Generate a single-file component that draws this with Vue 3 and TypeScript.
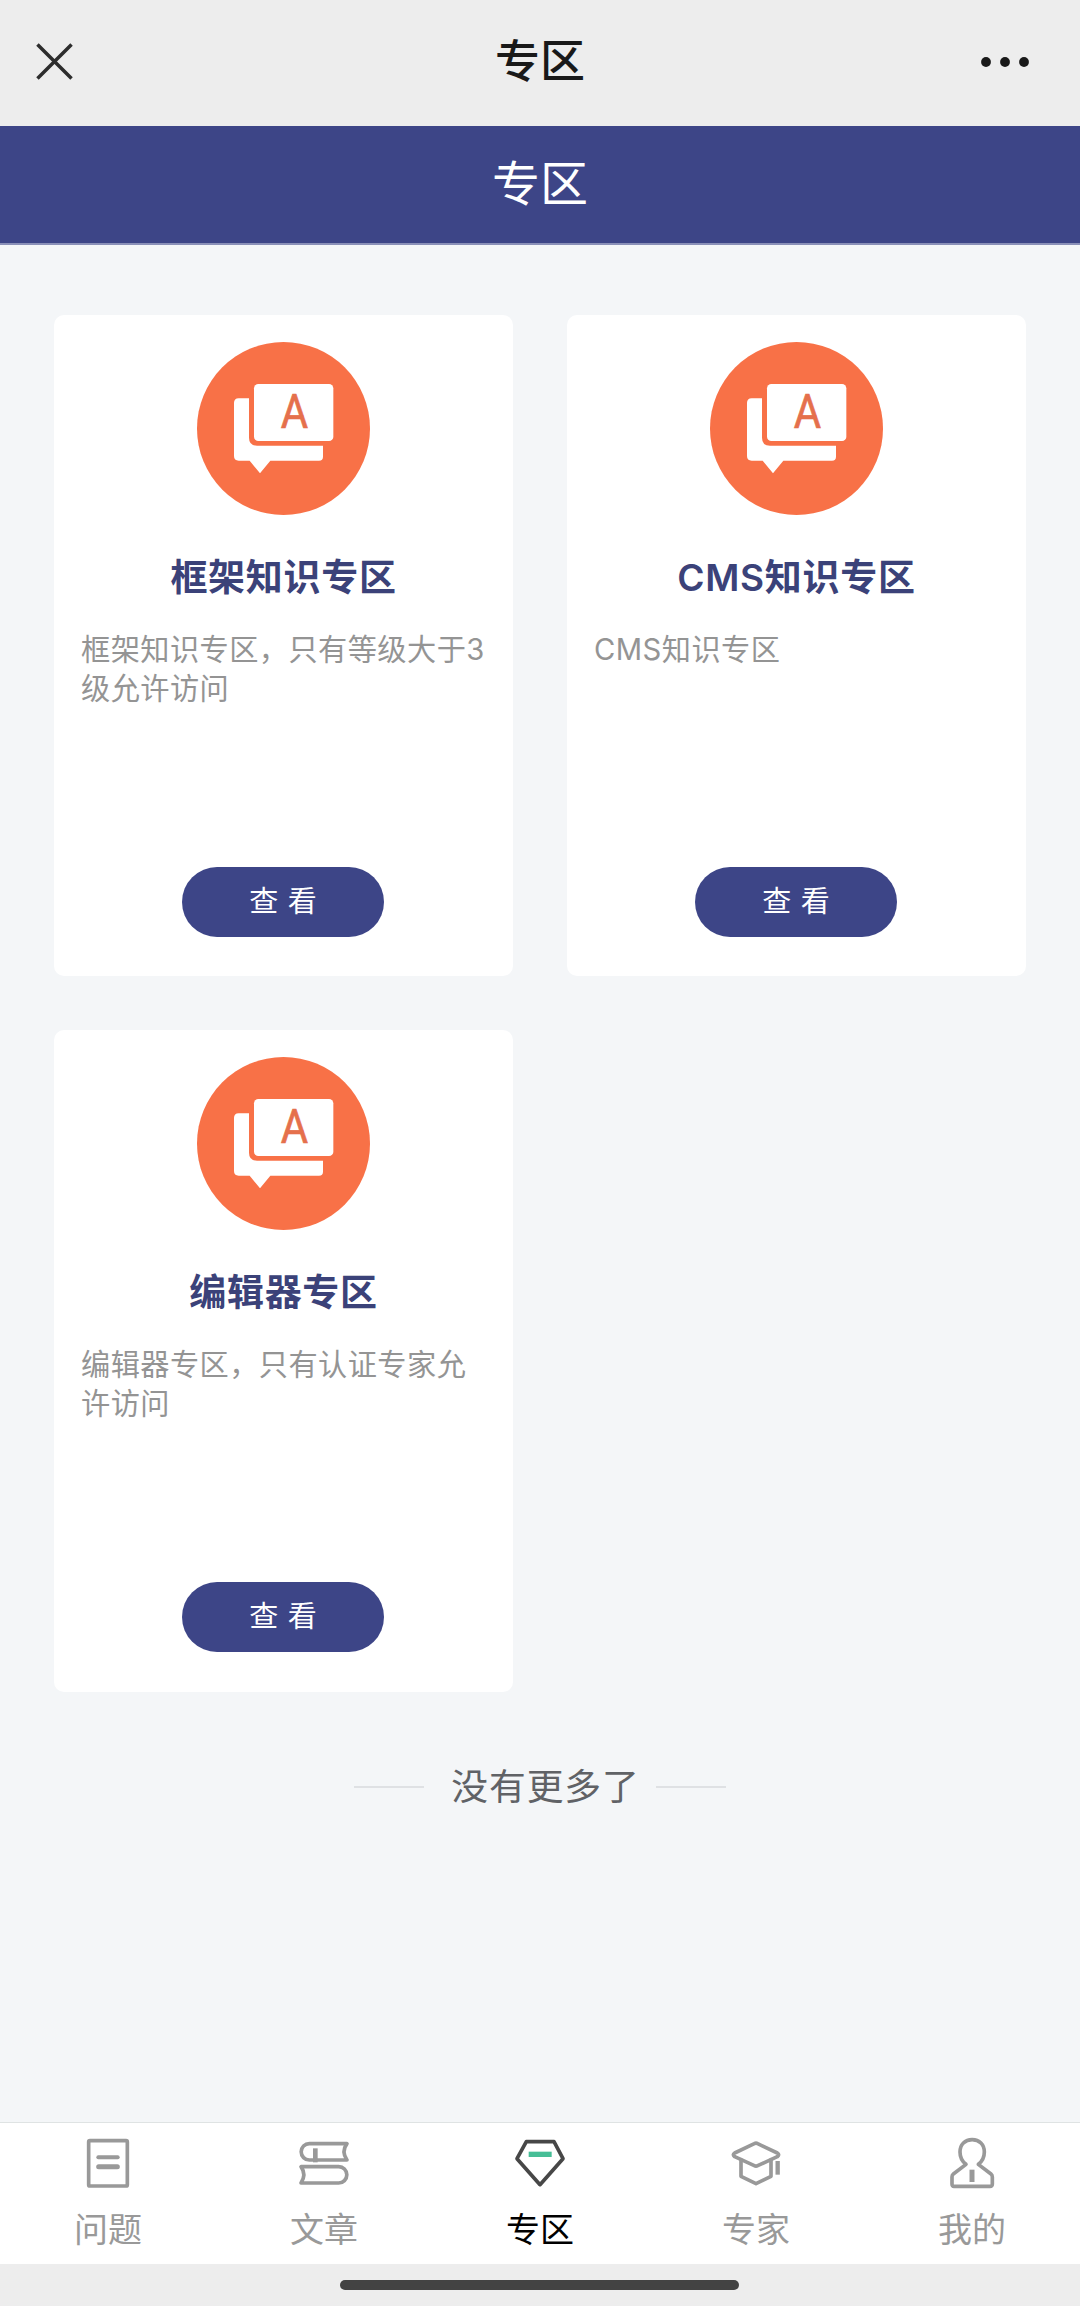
<script setup lang="ts">
interface Zone {
  id: number
  title: string
  desc: string
}

interface Tab {
  key: string
  label: string
}

const zones: Zone[] = [
  { id: 1, title: '框架知识专区', desc: '框架知识专区，只有等级大于3级允许访问' },
  { id: 2, title: 'CMS知识专区', desc: 'CMS知识专区' },
  { id: 3, title: '编辑器专区', desc: '编辑器专区，只有认证专家允许访问' },
]

const tabs: Tab[] = [
  { key: 'question', label: '问题' },
  { key: 'article', label: '文章' },
  { key: 'zone', label: '专区' },
  { key: 'expert', label: '专家' },
  { key: 'mine', label: '我的' },
]

const activeTab = 'zone'
</script>

<template>
  <div class="page">
    <header class="shell-bar">
      <div class="shell-side">
        <svg class="close" viewBox="0 0 38 38" fill="none" stroke="#2d2d2d" stroke-width="3.6">
          <path d="M1.500 1.500 36.500 36.500M36.500 1.500 1.500 36.500" />
        </svg>
      </div>
      <span class="shell-title">专区</span>
      <div class="shell-side shell-side-end">
        <svg class="more" viewBox="0 0 50 12" fill="#191919">
          <circle cx="6" cy="6" r="4.9" />
          <circle cx="25" cy="6" r="4.9" />
          <circle cx="44" cy="6" r="4.9" />
        </svg>
      </div>
    </header>

    <div class="nav-bar"><span>专区</span></div>

    <main class="content">
      <section class="grid">
        <article v-for="zone in zones" :key="zone.id" class="card">
          <svg class="badge" viewBox="0 0 519 519">
            <circle cx="259.5" cy="259.5" r="259.5" fill="#f87147" />
            <path
              fill="#fff"
              d="M111 183q0-14 14-14h31v118q0 24 24 24h198v33q0 12-12 12H220l-31 38-31-38h-33q-14 0-14-14z"
            />
            <rect x="171" y="126" width="238" height="171" rx="13" fill="#fff" />
            <text
              class="badge-letter"
              x="251"
              y="259"
              textLength="82"
              lengthAdjust="spacingAndGlyphs"
            >A</text>
          </svg>
          <h2 class="card-title">{{ zone.title }}</h2>
          <p class="card-desc">{{ zone.desc }}</p>
          <button class="card-btn" type="button">查 看</button>
        </article>
      </section>

      <div class="end">
        <i class="rule"></i>
        <span class="end-text">没有更多了</span>
        <i class="rule"></i>
      </div>
    </main>

    <nav class="tab-bar">
      <div
        v-for="tab in tabs"
        :key="tab.key"
        class="tab"
        :class="{ active: tab.key === activeTab }"
      >
        <svg
          class="tab-icon"
          viewBox="0 0 168 168"
          fill="none"
          stroke="currentColor"
          stroke-width="11"
          stroke-linejoin="round"
          stroke-linecap="round"
        >
          <template v-if="tab.key === 'question'">
            <rect x="26" y="17" width="116" height="136" rx="4" />
            <path d="M55 67H113" stroke-width="12" />
            <path d="M56 95H112" stroke-width="15" />
          </template>
          <template v-else-if="tab.key === 'article'">
            <path d="M153 26H40a24.500 24.500 0 0 0 0 49H153Q135 50 153 26z" />
            <path d="M58 40V82" stroke-width="14" stroke-linecap="butt" />
            <path d="M15 95H128a24.500 24.500 0 0 1 0 49H15Q32 119 15 95z" />
          </template>
          <template v-else-if="tab.key === 'zone'">
            <path d="M43 20H126L153 71 84 149 15 71z" />
            <path d="M50 58H119" stroke="#46be96" stroke-width="16" stroke-linecap="butt" />
          </template>
          <template v-else-if="tab.key === 'expert'">
            <path d="M79 26q5-3 10 0L148 54q8 5 0 11L89 92q-5 3-10 0L20 65q-8-6 0-11z" />
            <path d="M39 74V124L84 146 129 124V74" />
            <path d="M149 78V119" stroke-width="13" stroke-linecap="butt" />
          </template>
          <template v-else>
            <path
              d="M66 88C54 79 48 67 48 51 48 28 63 14 84.500 14S121 28 121 51C121 67 115 79 103 88L141 117Q145 120 145 126V147Q145 154 138 154H30Q24 154 24 147V126Q24 120 28 117z"
            />
            <path d="M84 104V141" stroke-width="15" stroke-linecap="butt" />
          </template>
        </svg>
        <span class="tab-label">{{ tab.label }}</span>
      </div>
    </nav>

    <div class="home-area"><i class="home-indicator"></i></div>
  </div>
</template>

<style>
body {
  margin: 0;
  background: #ededed;
}
</style>

<style scoped>
.page {
  display: flex;
  flex-direction: column;
  width: 1080px;
  height: 2306px;
  overflow: hidden;
  background: #f4f6f8;
  font-family: Inter, 'Noto Sans CJK SC', sans-serif;
}

.shell-bar {
  display: flex;
  flex: none;
  align-items: center;
  box-sizing: border-box;
  height: 126px;
  padding: 0 50px 3px 36px;
  background: #ededed;
}

.shell-side {
  display: flex;
  flex: 1;
  align-items: center;
}

.shell-side-end {
  justify-content: flex-end;
}

.close {
  width: 37px;
  height: 37px;
}

.shell-title {
  margin-left: 14px;
  color: #191919;
  font-size: 45px;
  font-weight: 500;
  line-height: 60px;
}

.more {
  width: 50px;
  height: 12px;
}

.nav-bar {
  display: flex;
  flex: none;
  align-items: center;
  justify-content: center;
  box-sizing: border-box;
  height: 119px;
  padding-bottom: 1px;
  border-bottom: 2px solid #8a90b8;
  background: #3d4587;
  color: #fff;
  font-size: 48px;
  line-height: 64px;
}

.content {
  flex: 1;
  padding: 70px 54px 0;
}

.grid {
  display: grid;
  grid-template-columns: 1fr 1fr;
  gap: 54px;
}

.card {
  display: flex;
  flex-direction: column;
  align-items: center;
  box-sizing: border-box;
  height: 661.4px;
  padding: 27px 27px 39.6px;
  border-radius: 10px;
  background: #fff;
}

.badge {
  flex: none;
  width: 173px;
  height: 173px;
}

.badge-letter {
  fill: #e5704c;
  stroke: #e5704c;
  stroke-width: 2px;
  font-family: Roboto, sans-serif;
  font-size: 142px;
  font-weight: 400;
}

.card-title {
  margin: 37px 0 0;
  color: #3b4279;
  font-size: 37px;
  font-weight: 600;
  letter-spacing: 0.7px;
  line-height: 52px;
}

.card-desc {
  align-self: stretch;
  margin: 26px 0 0;
  color: #949494;
  font-size: 29.2px;
  letter-spacing: 0.45px;
  line-height: 39px;
}

.card-btn {
  width: 202px;
  height: 70px;
  margin-top: auto;
  margin-right: 1px;
  padding: 0;
  border: 0;
  border-radius: 35px;
  background: #3d4587;
  color: #fff;
  font-family: inherit;
  font-size: 29px;
  line-height: 70px;
  word-spacing: 1.4px;
}

.end {
  display: flex;
  align-items: center;
  justify-content: center;
  margin-top: 69px;
}

.rule {
  width: 70px;
  height: 2px;
  background: #dfe1e4;
}

.end-text {
  margin: 0 16px 0 27px;
  color: #606266;
  font-size: 36.8px;
  letter-spacing: 0.9px;
  line-height: 52px;
}

.tab-bar {
  display: flex;
  flex: none;
  box-sizing: border-box;
  height: 142px;
  border-top: 1px solid #dfe3e3;
  background: #fff;
}

.tab {
  display: flex;
  flex: 1;
  flex-direction: column;
  align-items: center;
  padding-top: 12px;
  color: #999;
}

.tab-icon {
  width: 56px;
  height: 56px;
}

.tab-label {
  margin-top: 15px;
  font-size: 34px;
  line-height: 48px;
}

.tab.active {
  color: #474747;
}

.tab.active .tab-label {
  color: #000;
}

.home-area {
  display: flex;
  flex: none;
  justify-content: center;
  height: 42px;
  background: #ededed;
}

.home-indicator {
  width: 399px;
  height: 10px;
  margin-top: 16px;
  margin-right: 1px;
  border-radius: 5px;
  background: #434343;
}
</style>
